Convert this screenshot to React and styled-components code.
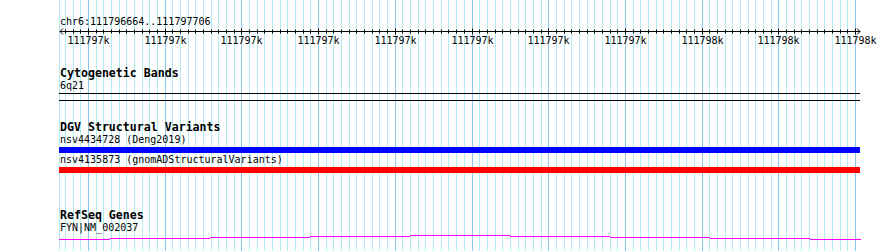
import styled, { createGlobalStyle } from "styled-components";

const GlobalStyle = createGlobalStyle`
  html, body {
    margin: 0;
    padding: 0;
    background: #fff;
  }
`;

const Page = styled.div`
  position: relative;
  width: 890px;
  height: 251px;
  overflow: hidden;
  background: #fff;
  color: #000;
  font-family: "DejaVu Sans Mono", "Liberation Mono", monospace;
`;

// grid lines sit behind every track, like a canvas
const GridLayer = styled.svg`
  position: absolute;
  left: 0;
  top: 0;
`;

const Tracks = styled.div`
  position: relative;
  display: flex;
  flex-direction: column;
  width: 801px;
  padding: 16px 0 0 59px;
`;

const Location = styled.div`
  font-size: 10px;
  line-height: 12px;
  padding-left: 1px;
  white-space: pre;
`;

const Ruler = styled.svg`
  display: block;
  overflow: visible;
`;

const Track = styled.section`
  display: flex;
  flex-direction: column;
  margin-top: ${p => p.$gap}px;
`;

const TrackTitle = styled.div`
  font-weight: bold;
  font-size: 11.6px;
  line-height: 13px;
  padding-left: 1px;
  white-space: pre;
`;

const FeatureLabel = styled.div`
  font-size: 10px;
  line-height: 12px;
  padding-left: 1px;
  white-space: pre;
`;

const BandLine = styled.div`
  height: 1px;
  background: #000;
  margin-top: ${p => p.$gap}px;
`;

const VariantBar = styled.div`
  height: 6px;
  margin: 1px 0 1px;
  background: ${p => p.$color};
`;

const GeneLine = styled.svg`
  display: block;
`;

const ORIGIN = 59;
const MAJOR0 = 88;
const STEP = 7.67;

const gridLines = [];
for (let k = -4; k <= 100; k++) {
  const x = Math.max(59, Math.round(MAJOR0 + k * STEP));
  gridLines.push({ x, major: k % 10 === 0 });
}

const majors = [];
for (let k = 0; k <= 100; k += 10) {
  const bp = 111796700 + k * 10;
  majors.push({ x: Math.round(MAJOR0 + k * STEP), label: Math.round(bp / 1000) + "k" });
}

const geneSegments = [
  [0, 51, 5],
  [51, 151, 4],
  [151, 251, 3],
  [251, 351, 2],
  [351, 451, 1],
  [451, 551, 2],
  [551, 651, 3],
  [651, 751, 4],
  [751, 802, 5],
];

function Grid() {
  return (
    <GridLayer width="890" height="251">
      {gridLines.map((g, i) => (
        <line
          key={i}
          x1={g.x + 0.5}
          x2={g.x + 0.5}
          y1="0"
          y2="251"
          stroke={g.major ? "#8cc8ec" : "#b0ecf0"}
          strokeWidth="1"
        />
      ))}
    </GridLayer>
  );
}

function Scale() {
  return (
    <Ruler width="802" height="18">
      <line x1="1" x2="801" y1="3.5" y2="3.5" stroke="#000" />
      <polyline points="4,0.5 1,3.5 4,6.5" fill="none" stroke="#000" />
      <polyline points="798,0.5 801,3.5 798,6.5" fill="none" stroke="#000" />
      {gridLines.slice(1).map((g, i) => (
        <line
          key={i}
          x1={g.x - ORIGIN + 0.5}
          x2={g.x - ORIGIN + 0.5}
          y1={g.major ? 0.5 : 1.5}
          y2={g.major ? 6.5 : 5.5}
          stroke="#000"
        />
      ))}
      {majors.map((m, i) => (
        <text
          key={i}
          x={m.x - ORIGIN + 0.5}
          y="15.7"
          textAnchor="middle"
          fontSize="10"
          fontFamily='"DejaVu Sans Mono", "Liberation Mono", monospace'
          fill="#000"
        >
          {m.label}
        </text>
      ))}
    </Ruler>
  );
}

export default function App() {
  return (
    <>
      <GlobalStyle />
      <Page>
        <Grid />
        <Tracks>
          <Location>chr6:111796664..111797706</Location>
          <Scale />

          <Track $gap={21}>
            <TrackTitle>Cytogenetic Bands</TrackTitle>
            <FeatureLabel>6q21</FeatureLabel>
            <BandLine $gap={1} />
            <BandLine $gap={6} />
          </Track>

          <Track $gap={20}>
            <TrackTitle>DGV Structural Variants</TrackTitle>
            <FeatureLabel>nsv4434728 (Deng2019)</FeatureLabel>
            <VariantBar $color="#0000ff" />
            <FeatureLabel>nsv4135873 (gnomADStructuralVariants)</FeatureLabel>
            <VariantBar $color="#ff0000" />
          </Track>

          <Track $gap={35}>
            <TrackTitle>RefSeq Genes</TrackTitle>
            <FeatureLabel>FYN|NM_002037</FeatureLabel>
            <GeneLine width="802" height="8">
              {geneSegments.map(([a, b, y], i) => (
                <rect key={i} x={a} y={y} width={b - a} height="1" fill="#ff00ff" />
              ))}
            </GeneLine>
          </Track>
        </Tracks>
      </Page>
    </>
  );
}
